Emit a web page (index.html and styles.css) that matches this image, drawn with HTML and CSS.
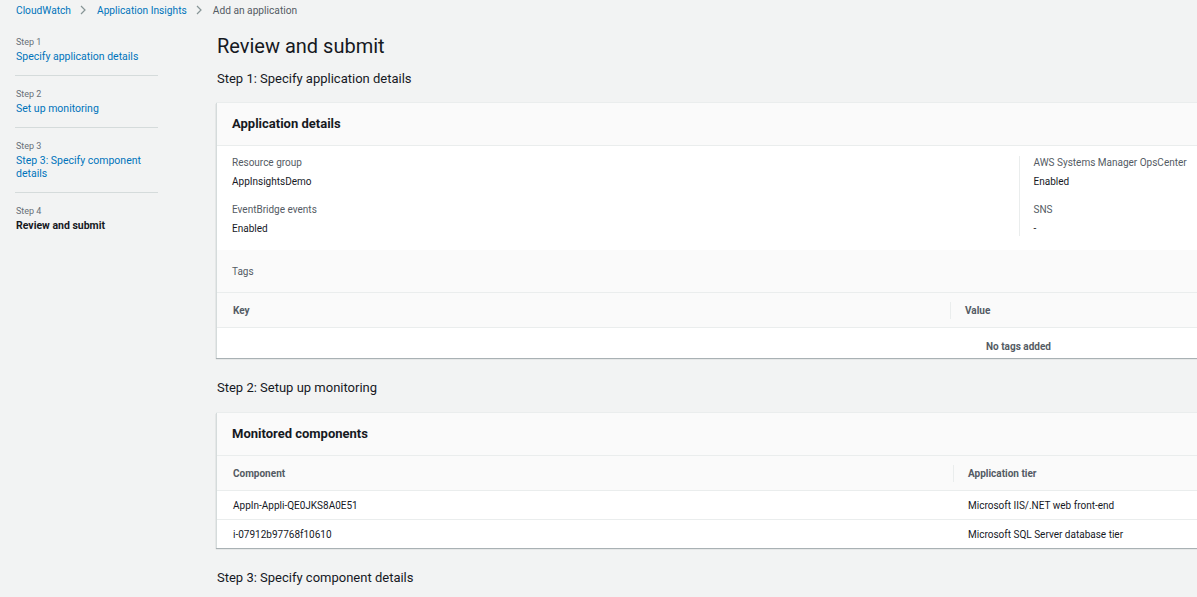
FILE: index.html
```html
<!DOCTYPE html>
<html lang="en">
<head>
    <meta charset="UTF-8">
    <meta name="viewport" content="width=device-width, initial-scale=1.0">
    <title>Add an application - CloudWatch</title>
    <link rel="stylesheet" href="styles.css">
</head>
<body>
    <nav class="breadcrumbs">
        <a href="#">CloudWatch</a>
        <svg class="crumb-sep" width="10" height="12" viewBox="0 0 10 12"><polyline points="3,2 7,6 3,10" fill="none" stroke="#879596" stroke-width="1.2"/></svg>
        <a href="#">Application Insights</a>
        <svg class="crumb-sep" width="10" height="12" viewBox="0 0 10 12"><polyline points="3,2 7,6 3,10" fill="none" stroke="#879596" stroke-width="1.2"/></svg>
        <span class="crumb-current">Add an application</span>
    </nav>

    <div class="layout">
        <!-- Pasos del asistente -->
        <aside class="wizard-steps">
            <div class="wizard-step">
                <div class="step-label">Step 1</div>
                <a href="#" class="step-link">Specify application details</a>
            </div>
            <div class="wizard-step">
                <div class="step-label">Step 2</div>
                <a href="#" class="step-link">Set up monitoring</a>
            </div>
            <div class="wizard-step">
                <div class="step-label">Step 3</div>
                <a href="#" class="step-link">Step 3: Specify component details</a>
            </div>
            <div class="wizard-step last">
                <div class="step-label">Step 4</div>
                <span class="step-current">Review and submit</span>
            </div>
        </aside>

        <main class="main">
            <h1 class="page-title">Review and submit</h1>

            <h2 class="section-title">Step 1: Specify application details</h2>
            <div class="card">
                <div class="card-header">Application details</div>
                <div class="columns">
                    <div class="column">
                        <div class="field">
                            <div class="field-label">Resource group</div>
                            <div class="field-value">AppInsightsDemo</div>
                        </div>
                        <div class="field">
                            <div class="field-label">EventBridge events</div>
                            <div class="field-value">Enabled</div>
                        </div>
                    </div>
                    <div class="column divided">
                        <div class="field">
                            <div class="field-label">AWS Systems Manager OpsCenter</div>
                            <div class="field-value">Enabled</div>
                        </div>
                        <div class="field">
                            <div class="field-label">SNS</div>
                            <div class="field-value">-</div>
                        </div>
                    </div>
                </div>
                <div class="tags-header">Tags</div>
                <table class="table">
                    <thead>
                        <tr>
                            <th class="col-key">Key</th>
                            <th><span class="th-sep">Value</span></th>
                        </tr>
                    </thead>
                    <tbody>
                        <tr>
                            <td colspan="2" class="empty">No tags added</td>
                        </tr>
                    </tbody>
                </table>
            </div>

            <h2 class="section-title">Step 2: Setup up monitoring</h2>
            <div class="card">
                <div class="card-header">Monitored components</div>
                <table class="table">
                    <thead>
                        <tr>
                            <th class="col-component">Component</th>
                            <th><span class="th-sep">Application tier</span></th>
                        </tr>
                    </thead>
                    <tbody>
                        <tr>
                            <td>AppIn-Appli-QE0JKS8A0E51</td>
                            <td>Microsoft IIS/.NET web front-end</td>
                        </tr>
                        <tr>
                            <td>i-07912b97768f10610</td>
                            <td>Microsoft SQL Server database tier</td>
                        </tr>
                    </tbody>
                </table>
            </div>

            <h2 class="section-title">Step 3: Specify component details</h2>
        </main>
    </div>
</body>
</html>
```

FILE: styles.css
```css
body {
    margin: 0;
    background: #f2f3f3;
    color: #16191f;
    font-family: Roboto, "Liberation Sans", sans-serif;
    font-size: 10px;
    overflow: hidden;
}

a {
    color: #0073bb;
    text-decoration: none;
}

/* Breadcrumbs */
.breadcrumbs {
    display: flex;
    align-items: center;
    height: 20px;
    padding-left: 16px;
    font-size: 10.2px;
}

.crumb-sep {
    margin: 0 9px 0 7px;
}

.crumb-current {
    color: #545b64;
}

.layout {
    display: flex;
    margin-top: 4px;
}

/* Sidebar */
.wizard-steps {
    width: 143px;
    flex-shrink: 0;
    margin-left: 15px;
}

.wizard-step {
    padding: 12px 0 12px 1px;
    border-bottom: 1px solid #d5dbdb;
}

.wizard-step.last {
    border-bottom: none;
}

.step-label {
    font-size: 9px;
    line-height: 12px;
    color: #687078;
}

.step-link,
.step-current {
    display: block;
    margin-top: 2px;
    font-size: 10.5px;
    line-height: 13px;
}

.step-current {
    font-weight: bold;
    color: #16191f;
}

/* Main */
.main {
    width: 1604px;
    flex-shrink: 0;
    margin-left: 58px;
}

.page-title {
    margin: 8px 0 0 1px;
    font-size: 20px;
    font-weight: normal;
    line-height: 28px;
}

.section-title {
    margin: 10px 0 15px 1px;
    font-size: 13px;
    font-weight: normal;
    line-height: 18px;
    color: #16191f;
}

.card + .section-title {
    margin-top: 21px;
    margin-bottom: 16px;
}

.card {
    background: #ffffff;
    border-left: 1px solid #d5dbdb;
    box-shadow: 0 1px 1px 0 rgba(0, 28, 36, 0.3), 0 -1px 0 0 #eaeded;
}

.card-header {
    padding: 12px 15px;
    font-size: 13px;
    font-weight: bold;
    line-height: 18px;
    background: #fafafa;
    border-bottom: 1px solid #eaeded;
}

.columns {
    display: grid;
    grid-template-columns: 1fr 1fr;
    padding: 10px 15px 14px;
}

.column.divided {
    border-left: 1px solid #eaeded;
    padding-left: 14px;
}

.field + .field {
    margin-top: 14px;
}

.field-label {
    font-size: 10px;
    line-height: 14px;
    color: #545b64;
}

.field-value {
    margin-top: 5px;
    font-size: 10px;
    line-height: 14px;
}

.tags-header {
    padding: 14px 15px 13px;
    font-size: 10px;
    line-height: 15px;
    color: #545b64;
    background: #fafafa;
    border-bottom: 1px solid #eaeded;
}

.table {
    width: 100%;
    border-collapse: collapse;
    font-size: 10px;
}

.table th {
    height: 34px;
    padding: 0 0 0 16px;
    text-align: left;
    font-weight: bold;
    color: #545b64;
    background: #fafafa;
    border-bottom: 1px solid #eaeded;
}

.table th + th {
    padding-left: 0;
}

.th-sep {
    display: block;
    border-left: 1px solid #eaeded;
    padding-left: 14px;
    line-height: 17px;
}

.col-key {
    width: 717px;
}

.col-component {
    width: 720px;
}

.table td {
    height: 27px;
    padding: 1px 0 0 16px;
    color: #16191f;
    border-bottom: 1px solid #eaeded;
}

.table td + td {
    padding-left: 15px;
}

.table tr:last-child td {
    border-bottom: none;
}

.table td.empty {
    height: 24px;
    padding: 6px 0 0;
    text-align: center;
    font-weight: bold;
    color: #545b64;
}
```
